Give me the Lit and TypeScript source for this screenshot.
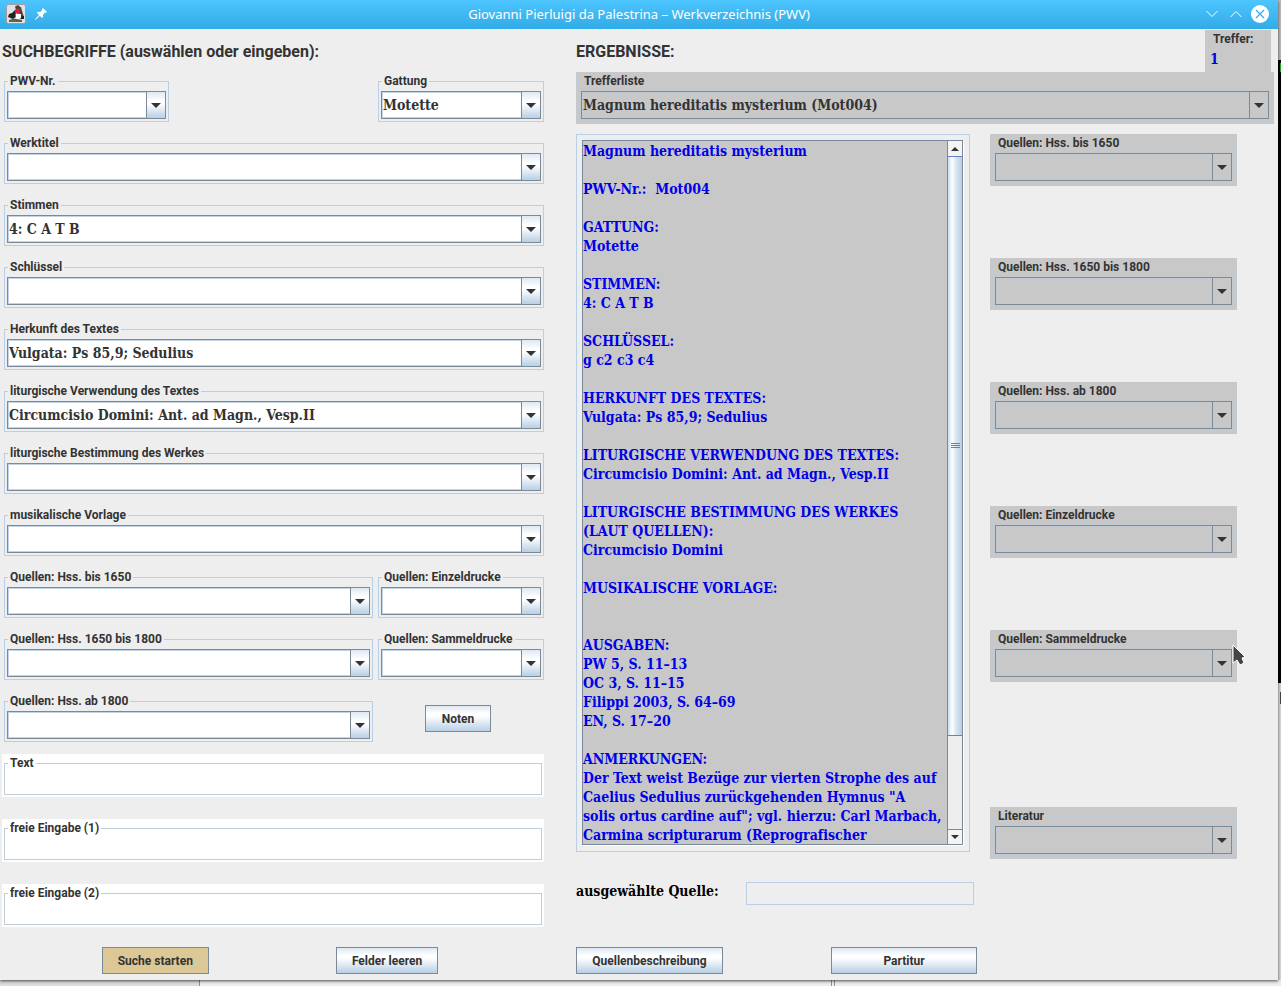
import { LitElement, html, css, svg, nothing } from "lit";
import { customElement, property } from "lit/decorators.js";

const shared = css`
  * {
    box-sizing: border-box;
  }
  fieldset {
    margin: 0;
    min-width: 0;
    padding: 3px 2px 2px;
    border: 1px solid #b8cfe5;
  }
  legend {
    margin-left: 1px;
    padding: 0 2px;
    height: 14px;
    font: bold 12px/14px Roboto, sans-serif;
    color: #333;
    white-space: nowrap;
  }
  legend label {
    display: block;
  }
`;

@customElement("combo-field")
export class ComboField extends LitElement {
  @property() label = "";
  @property() value = "";
  @property({ type: Boolean, reflect: true }) result = false;

  static styles = [
    shared,
    css`
      :host {
        display: block;
        min-width: 0;
      }
      :host([result]) {
        padding: 2px;
        background: #c8c8c8;
      }
      .combo {
        display: grid;
        grid-template-columns: minmax(0, 1fr) 20px;
        height: 28px;
      }
      select {
        grid-area: 1 / 1 / 2 / 3;
        appearance: none;
        width: 100%;
        height: 28px;
        margin: 0;
        padding: 0 22px 0 1px;
        border: 1px solid #7a8a99;
        border-radius: 0;
        background: #fff;
        box-shadow: inset 0 0 0 1px #c3d4e5;
        color: #333;
        font: bold 14px/19px "Roboto Slab", "DejaVu Serif Condensed", "DejaVu Serif", serif;
      }
      .arrow {
        grid-area: 1 / 2;
        display: grid;
        place-items: center;
        border: 1px solid #7a8a99;
        background: linear-gradient(#dde8f3, #fff 35%, #fff 45%, #b8cfe5);
        pointer-events: none;
      }
      :host([result]) fieldset {
        border-color: #c1cad3;
      }
      :host([result]) select {
        background: #c8c8c8;
        box-shadow: inset 0 0 0 1px #c1cad3;
      }
      :host([result]) .arrow {
        background: #c8c8c8;
      }
    `,
  ];

  render() {
    return html`<fieldset>
      <legend><label for="box">${this.label}</label></legend>
      <div class="combo">
        <select id="box"><option>${this.value}</option></select>
        <span class="arrow">
          <svg width="10" height="5" viewBox="0 0 10 5"><path d="M0 0h10L5 5z" fill="#333" /></svg>
        </span>
      </div>
    </fieldset>`;
  }
}

@customElement("text-field")
export class TextField extends LitElement {
  @property() label = "";

  static styles = [
    shared,
    css`
      :host {
        display: block;
        padding: 2px;
        background: #fff;
      }
      fieldset {
        padding: 0 2px;
        border-color: #c0cddb;
      }
      input {
        display: block;
        width: 100%;
        height: 24px;
        padding: 0 2px;
        border: 0;
        background: #fff;
        color: #333;
        font: bold 14px/19px "Roboto Slab", "DejaVu Serif Condensed", serif;
      }
    `,
  ];

  render() {
    return html`<fieldset>
      <legend><label for="box">${this.label}</label></legend>
      <input id="box" type="text" />
    </fieldset>`;
  }
}

const wideFields = [
  ["Werktitel", ""],
  ["Stimmen", "4: C A T B"],
  ["Schlüssel", ""],
  ["Herkunft des Textes", "Vulgata: Ps 85,9; Sedulius"],
  ["liturgische Verwendung des Textes", "Circumcisio Domini: Ant. ad Magn., Vesp.II"],
  ["liturgische Bestimmung des Werkes", ""],
  ["musikalische Vorlage", ""],
];

const sources = [
  "Quellen: Hss. bis 1650",
  "Quellen: Hss. 1650 bis 1800",
  "Quellen: Hss. ab 1800",
  "Quellen: Einzeldrucke",
  "Quellen: Sammeldrucke",
];

const details = `Magnum hereditatis mysterium

PWV-Nr.:  Mot004

GATTUNG:
Motette

STIMMEN:
4: C A T B

SCHLÜSSEL:
g c2 c3 c4

HERKUNFT DES TEXTES:
Vulgata: Ps 85,9; Sedulius

LITURGISCHE VERWENDUNG DES TEXTES:
Circumcisio Domini: Ant. ad Magn., Vesp.II

LITURGISCHE BESTIMMUNG DES WERKES
(LAUT QUELLEN):
Circumcisio Domini

MUSIKALISCHE VORLAGE:


AUSGABEN:
PW 5, S. 11–13
OC 3, S. 11–15
Filippi 2003, S. 64–69
EN, S. 17–20

ANMERKUNGEN:
Der Text weist Bezüge zur vierten Strophe des auf
Caelius Sedulius zurückgehenden Hymnus "A
solis ortus cardine auf"; vgl. hierzu: Carl Marbach,
Carmina scripturarum (Reprografischer`;

const pointer = svg`<path d="M1 1v18l4-3 3 5 4-2-2-5 3-1z" fill="#444" stroke="#fff" stroke-width="1"/>`;

@customElement("app-root")
export class AppRoot extends LitElement {
  static styles = [
    shared,
    css`
      :host {
        display: block;
        min-height: 100vh;
        padding-right: 3px;
        background:
          linear-gradient(#1fb01f, #1fb01f) 100% 63px / 1px 9px no-repeat,
          linear-gradient(#444, #444) 100% 692px / 1px 12px no-repeat,
          linear-gradient(#8a9096, #8a9096) 199px 100% / 1px 6px no-repeat,
          linear-gradient(#8a9096, #8a9096) 831px 100% / 1px 6px no-repeat,
          linear-gradient(#8a9096, #8a9096) 834px 100% / 1px 6px no-repeat,
          linear-gradient(90deg, #dcdcdc 200px, #ededed 200px) 0 100% / 100% 6px no-repeat,
          linear-gradient(#b9bcbe 60px, #000 60px, #000 683px, #dadada 683px);
        color: #333;
        font: bold 12px/14px Roboto, sans-serif;
      }
      .window {
        background: #eee;
        box-shadow: 0 1px 3px rgba(0, 0, 0, 0.7);
      }
      .titlebar {
        display: grid;
        grid-template-columns: 1fr auto 1fr;
        align-items: center;
        height: 29px;
        padding: 0 6px 1px;
        background: linear-gradient(#4dc5ff, #31abe6);
        color: #fff;
        font: 13px/18px "Noto Sans", sans-serif;
      }
      .tools,
      .controls {
        display: flex;
        align-items: center;
      }
      .tools {
        gap: 3px;
      }
      .controls {
        justify-content: flex-end;
      }
      .titlebar h1 {
        margin: 0;
        font: inherit;
      }
      .titlebar button {
        width: 24px;
        height: 24px;
        padding: 0;
        border: 0;
        background: none;
      }
      .titlebar button svg {
        display: block;
        margin: 0 auto;
      }
      .content {
        display: grid;
        grid-template-columns: 542fr 698fr;
        gap: 0 32px;
        padding: 0 4px 6px 2px;
      }
      h2 {
        margin: 0;
        font: bold 16px/20px Roboto, sans-serif;
        white-space: nowrap;
      }
      .search h2 {
        padding: 13px 0 12px;
      }
      .combos {
        display: grid;
        gap: 14px;
        padding-left: 2px;
      }
      .row {
        display: grid;
        grid-template-columns: 369fr 166fr;
        gap: 5px;
      }
      .row.top {
        grid-template-columns: 165fr 166fr;
        gap: 209px;
      }
      .center {
        display: flex;
        align-items: center;
        justify-content: center;
        padding-right: 6px;
      }
      .texts {
        display: grid;
        gap: 22px;
        padding: 12px 0 20px;
      }
      .action {
        height: 27px;
        padding: 1px 16px 0;
        border: 1px solid #7a8a99;
        border-radius: 0;
        background: linear-gradient(#dde8f3, #fff 30%, #fff 40%, #b8cfe5);
        color: #333;
        font: bold 12px/14px Roboto, sans-serif;
        white-space: nowrap;
      }
      .primary {
        background: #dcc797;
      }
      .spread {
        gap: 127px;
      }
      .spread .action {
        padding: 0 15px;
      }
      .head {
        display: flex;
        justify-content: space-between;
        height: 43px;
        padding: 1px 3px 0 0;
      }
      .head h2 {
        padding-top: 12px;
      }
      .hits {
        width: 66px;
        padding: 2px 5px;
        background: #c8c8c8;
      }
      .hits label {
        display: block;
        padding-left: 3px;
      }
      .hits output {
        display: block;
        padding-top: 4px;
        color: #0000e6;
      }
      .slab,
      .hits output,
      textarea {
        font: bold 14px/19px "Roboto Slab", "DejaVu Serif Condensed", "DejaVu Serif", serif;
        font-variant-ligatures: none;
      }
      .body {
        display: grid;
        grid-template-columns: 394fr 284fr;
        align-items: start;
        gap: 20px;
        padding: 10px 0 23px;
      }
      .panel {
        padding: 5px;
        border: 1px solid #b8cfe5;
      }
      .scroller {
        display: grid;
        grid-template-columns: minmax(0, 1fr) 15px;
        border: 1px solid #7a8a99;
        box-shadow: 1px 1px 0 #fff;
        margin: 0 1px 1px 0;
      }
      textarea {
        display: block;
        width: 100%;
        height: 703px;
        padding: 1px 0 0;
        border: 0;
        border-radius: 0;
        outline: 0;
        resize: none;
        overflow: hidden;
        background: #c8c8c8;
        color: #0000e6;
        white-space: pre-wrap;
      }
      .bar {
        display: flex;
        flex-direction: column;
        border-left: 1px solid #7a8a99;
        background: #eee;
      }
      .bar button {
        display: grid;
        place-items: center;
        height: 15px;
        padding: 0;
        border: 0;
        background: #f4f4f4;
      }
      .bar .down {
        border-top: 1px solid #7a8a99;
      }
      .thumb {
        display: grid;
        place-items: center;
        flex: 579;
        border: solid #6382bf;
        border-width: 1px 0;
        background: linear-gradient(90deg, #c8dcf0, #fff 30%, #dbe7f3 55%, #b8cfe5);
      }
      .track {
        flex: 93;
      }
      .sources {
        display: grid;
        gap: 72px;
        padding-right: 37px;
      }
      .slot {
        position: relative;
      }
      .slot.last {
        margin-top: 53px;
      }
      .pointer {
        position: absolute;
        left: 242px;
        top: 14px;
      }
      .chosen {
        display: grid;
        grid-template-columns: 170px 228px;
        align-items: start;
        padding-bottom: 42px;
      }
      .chosen label {
        color: #000;
      }
      .chosen input {
        width: 100%;
        height: 23px;
        padding: 0 2px;
        border: 1px solid #b8cfe5;
        background: #eee;
      }
      .outputs {
        display: grid;
        grid-template-columns: 147px 146px;
        gap: 108px;
      }
      .outputs .action {
        padding: 0;
      }
    `,
  ];

  private titlebar() {
    return html`<header class="titlebar">
      <div class="tools">
        <svg width="20" height="20" viewBox="0 0 20 20">
          <rect x=".5" y=".5" width="19" height="19" rx="2" fill="#dfe3e6" stroke="#a9979f" />
          <path d="M9 2.500l3-1.500 3 2.500 1.500 5L18 14l-4 1-3-6z" fill="#4a403d" />
          <path d="M2 13l1-3 3-1 3-3 2 6-4 3z" fill="#26221f" />
          <path d="M9.500 9.500l5.500.5v4l-5 2z" fill="#fff" />
          <circle cx="11.500" cy="7" r="2.600" fill="#d8213d" />
          <path d="M3 16l5-1.500 8 1.500v2H3z" fill="#56654e" />
          <path d="M15 13l3-1.500V15h-3z" fill="#222" />
        </svg>
        <button aria-label="Anheften">
          <svg width="12" height="12" viewBox="0 0 12 12">
            <path d="M8 0l4 4-1.200.8-.8-.3-2 2.300.2 2L7 10 4.800 7.800 1 11.500 0 12l.5-1.200L4 7 1.800 4.800l1.200-1 2.300.3 2-2L7 1z" fill="#fff" />
          </svg>
        </button>
      </div>
      <h1>Giovanni Pierluigi da Palestrina – Werkverzeichnis (PWV)</h1>
      <div class="controls">
        <button aria-label="Minimieren">
          <svg width="12" height="8" viewBox="0 0 12 8"><path d="M.5 1L6 6.500 11.500 1" fill="none" stroke="#fff" /></svg>
        </button>
        <button aria-label="Maximieren">
          <svg width="12" height="8" viewBox="0 0 12 8"><path d="M.5 7L6 1.500 11.500 7" fill="none" stroke="#fff" /></svg>
        </button>
        <button aria-label="Schließen">
          <svg width="18" height="18" viewBox="0 0 18 18">
            <circle cx="9" cy="9" r="9" fill="#fff" />
            <path d="M5 5l8 8M13 5l-8 8" stroke="#35aee9" stroke-width="1.200" />
          </svg>
        </button>
      </div>
    </header>`;
  }

  render() {
    return html`<div class="window">
      ${this.titlebar()}
      <main class="content">
        <section class="search">
          <h2>SUCHBEGRIFFE (auswählen oder eingeben):</h2>
          <div class="combos">
            <div class="row top">
              <combo-field label="PWV-Nr."></combo-field>
              <combo-field label="Gattung" value="Motette"></combo-field>
            </div>
            ${wideFields.map(([l, v]) => html`<combo-field .label=${l} .value=${v}></combo-field>`)}
            <div class="row">
              <combo-field label="Quellen: Hss. bis 1650"></combo-field>
              <combo-field label="Quellen: Einzeldrucke"></combo-field>
            </div>
            <div class="row">
              <combo-field label="Quellen: Hss. 1650 bis 1800"></combo-field>
              <combo-field label="Quellen: Sammeldrucke"></combo-field>
            </div>
            <div class="row">
              <combo-field label="Quellen: Hss. ab 1800"></combo-field>
              <div class="center"><button class="action">Noten</button></div>
            </div>
          </div>
          <div class="texts">
            <text-field label="Text"></text-field>
            <text-field label="freie Eingabe (1)"></text-field>
            <text-field label="freie Eingabe (2)"></text-field>
          </div>
          <div class="center spread">
            <button class="action primary">Suche starten</button>
            <button class="action">Felder leeren</button>
          </div>
        </section>
        <section>
          <div class="head">
            <h2>ERGEBNISSE:</h2>
            <div class="hits"><label for="hits">Treffer:</label><output id="hits">1</output></div>
          </div>
          <combo-field result label="Trefferliste" value="Magnum hereditatis mysterium (Mot004)"></combo-field>
          <div class="body">
            <div class="panel">
              <div class="scroller">
                <textarea readonly aria-label="Werkdaten" .value=${details}></textarea>
                <div class="bar">
                  <button aria-label="Nach oben">
                    <svg width="8" height="4" viewBox="0 0 8 4"><path d="M0 4h8L4 0z" fill="#333" /></svg>
                  </button>
                  <div class="thumb">
                    <svg width="9" height="6" viewBox="0 0 9 6"><path d="M0 .5h9M0 2.500h9M0 4.500h9" stroke="#6382bf" /></svg>
                  </div>
                  <div class="track"></div>
                  <button class="down" aria-label="Nach unten">
                    <svg width="8" height="4" viewBox="0 0 8 4"><path d="M0 0h8L4 4z" fill="#333" /></svg>
                  </button>
                </div>
              </div>
            </div>
            <div class="sources">
              ${sources.map(
                (l, i) => html`<div class="slot">
                  <combo-field result .label=${l}></combo-field>
                  ${i === 4
                    ? html`<svg class="pointer" width="14" height="22" viewBox="0 0 14 22">${pointer}</svg>`
                    : nothing}
                </div>`
              )}
              <div class="slot last"><combo-field result label="Literatur"></combo-field></div>
            </div>
          </div>
          <div class="chosen">
            <label class="slab" for="chosen">ausgewählte Quelle:</label>
            <input id="chosen" type="text" readonly />
          </div>
          <div class="outputs">
            <button class="action">Quellenbeschreibung</button>
            <button class="action">Partitur</button>
          </div>
        </section>
      </main>
    </div>`;
  }
}
